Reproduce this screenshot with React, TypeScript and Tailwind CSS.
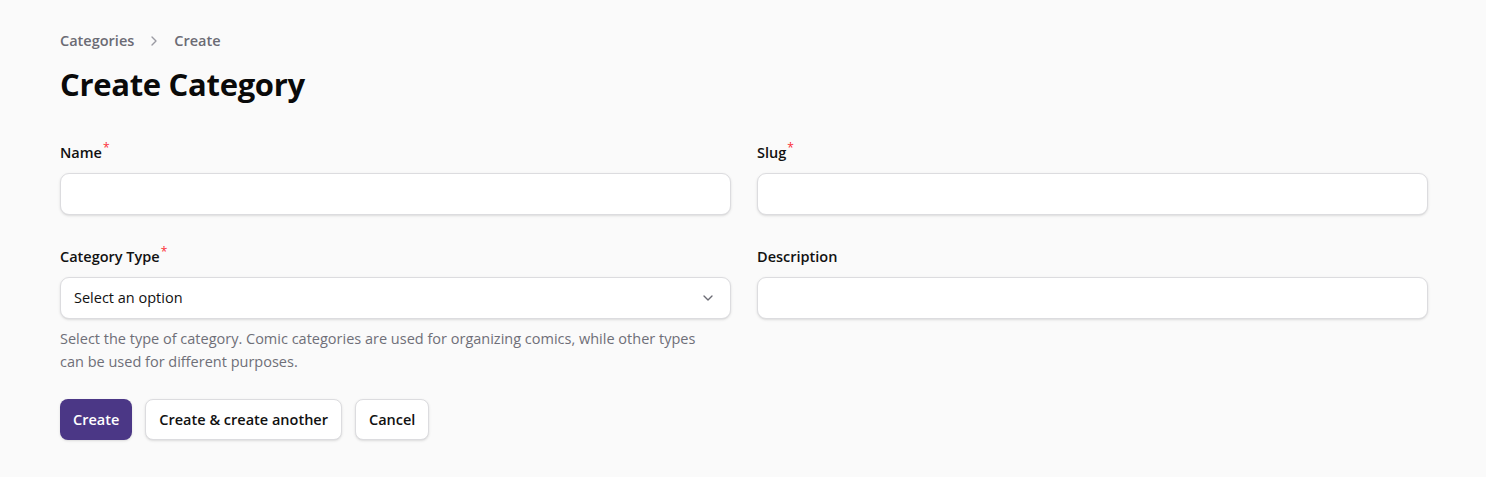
import { ChevronDown, ChevronRight } from "lucide-react";

const font = { fontFamily: '"Open Sans", "Noto Sans", Arial, sans-serif' };

function Label({ text, required }: { text: string; required?: boolean }) {
  return (
    <div className="h-[24px] flex items-center text-[14.5px] font-semibold text-[#111111]">
      <span>{text}</span>
      {required && <sup className="text-red-500 font-medium ml-[1px] text-[12px] -top-[5px] relative">*</sup>}
    </div>
  );
}

function TextInput() {
  return (
    <input
      type="text"
      className="w-full h-[42px] rounded-[9px] border border-[#dcdcdf] bg-white shadow-sm px-3 outline-none"
    />
  );
}

export default function App() {
  return (
    <div style={font} className="min-h-[477px] bg-[#fafafa] pl-[60px] pr-[58px] pt-[29px]">
      {/* breadcrumb */}
      <nav className="flex items-center gap-[12px] h-[24px] text-[14.5px] font-semibold text-[#6b6b74]">
        <span>Categories</span>
        <ChevronRight className="w-[16px] h-[16px] text-[#9a9aa2]" strokeWidth={2} />
        <span>Create</span>
      </nav>

      <h1 className="mt-[12px] text-[31px] leading-[38px] font-bold tracking-[-0.3px] text-[#0a0a0a]">
        Create Category
      </h1>

      <form className="mt-[38px] grid grid-cols-2 gap-x-[26px] gap-y-[30px]">
        <div className="flex flex-col gap-[8px]">
          <Label text="Name" required />
          <TextInput />
        </div>
        <div className="flex flex-col gap-[8px]">
          <Label text="Slug" required />
          <TextInput />
        </div>
        <div className="flex flex-col gap-[8px]">
          <Label text="Category Type" required />
          <div className="w-full h-[42px] rounded-[9px] border border-[#dcdcdf] bg-white shadow-sm pl-[13px] pr-[14px] flex items-center justify-between">
            <span className="text-[14.5px] text-[#111111]">Select an option</span>
            <ChevronDown className="w-[16px] h-[16px] text-[#6b6b74]" strokeWidth={2} />
          </div>
          <p className="text-[14.5px] leading-[23px] text-[#6f6f78] pr-[16px]">
            Select the type of category. Comic categories are used for organizing comics, while other types can be used for different purposes.
          </p>
        </div>
        <div className="flex flex-col gap-[8px]">
          <Label text="Description" />
          <TextInput />
        </div>
      </form>

      <div className="mt-[26px] flex gap-[13px]">
        <button className="h-[41px] px-[13px] rounded-[8px] bg-[#4b3786] text-white text-[14.5px] font-semibold shadow-sm">
          Create
        </button>
        <button className="h-[41px] px-[13px] rounded-[8px] bg-white border border-[#dcdcdf] text-[#111111] text-[14.5px] font-semibold shadow-sm">
          Create &amp; create another
        </button>
        <button className="h-[41px] px-[13px] rounded-[8px] bg-white border border-[#dcdcdf] text-[#111111] text-[14.5px] font-semibold shadow-sm">
          Cancel
        </button>
      </div>
    </div>
  );
}
